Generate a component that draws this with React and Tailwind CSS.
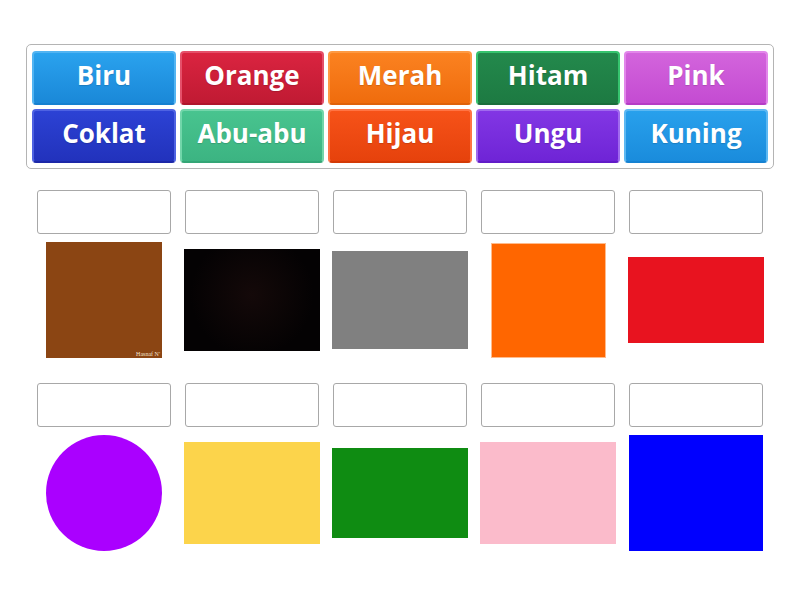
import React from "react";

const tiles = [
  { t: "Biru", c: "from-[#2aa2ee] to-[#1a88d8] border-[#52b4f2] border-b-[#1580d0]" },
  { t: "Orange", c: "from-[#da2440] to-[#c01a33] border-[#e5506a] border-b-[#b0152c]" },
  { t: "Merah", c: "from-[#fb8220] to-[#ef6c0c] border-[#fd9a44] border-b-[#e06208]" },
  { t: "Hitam", c: "from-[#23894c] to-[#1d7a42] border-[#36c46e] border-b-[#1a6e3b]" },
  { t: "Pink", c: "from-[#d364dc] to-[#c44bd2] border-[#e286ea] border-b-[#b53cc6]" },
  { t: "Coklat", c: "from-[#2c42d4] to-[#2232bc] border-[#4e62e2] border-b-[#1c28a8]" },
  { t: "Abu-abu", c: "from-[#48c48f] to-[#3cb482] border-[#72d6aa] border-b-[#34a676]" },
  { t: "Hijau", c: "from-[#f65218] to-[#e6420c] border-[#ff7444] border-b-[#d43a06]" },
  { t: "Ungu", c: "from-[#8236e4] to-[#6f24d6] border-[#a06aee] border-b-[#621cc8]" },
  { t: "Kuning", c: "from-[#28a0ec] to-[#1a8cdc] border-[#5cb8f2] border-b-[#1582d2]" },
];

function Tile({ t, c }) {
  return (
    <div
      className={`h-[54px] rounded-[4px] border-2 bg-linear-to-b ${c} flex items-center justify-center pb-[6px] text-white text-[26px] font-bold leading-none`}
      style={{ fontFamily: '"Open Sans", "Noto Sans", sans-serif' }}
    >
      <span className="[text-shadow:0_1px_1px_rgba(0,0,0,0.15)]">{t}</span>
    </div>
  );
}

function DropBox() {
  return <div className="w-[134px] h-[44px] mx-auto border border-[#a8a8a8] rounded-[3px] bg-white" />;
}

const row1 = [
  <div key="a" className="relative w-[116px] h-[116px] bg-[#8b4513]">
    <span className="absolute right-[2px] bottom-[1px] text-[6px] leading-none text-[#f0e0d0]" style={{ fontFamily: '"Liberation Serif", serif' }}>
      Hasnaf N'
    </span>
  </div>,
  <div key="b" className="w-[136px] h-[102px] bg-[radial-gradient(circle_at_50%_45%,#140909,#040203_70%)]" />,
  <div key="c" className="w-[136px] h-[98px] bg-[#808080]" />,
  <div key="d" className="w-[115px] h-[115px] bg-[#ff6600] border border-[#ffbb8c]" />,
  <div key="e" className="w-[136px] h-[86px] bg-[#e8131f]" />,
];

const row2 = [
  <div key="a" className="w-[116px] h-[116px] rounded-full bg-[#aa00ff]" />,
  <div key="b" className="w-[136px] h-[102px] bg-[#fcd44b]" />,
  <div key="c" className="w-[136px] h-[90px] bg-[#0f8c12]" />,
  <div key="d" className="w-[136px] h-[102px] bg-[#fbbbcb]" />,
  <div key="e" className="w-[134px] h-[116px] bg-[#0000ff]" />,
];

function Row({ imgs }) {
  return (
    <div className="grid grid-cols-[repeat(5,148px)] h-[193px]">
      {imgs.map((img, i) => (
        <div key={i} className="flex flex-col items-center">
          <DropBox />
          <div className="mt-[6px] h-[120px] w-full flex items-center justify-center">{img}</div>
        </div>
      ))}
    </div>
  );
}

export default function App() {
  return (
    <div className="w-[800px] h-[600px] bg-white relative overflow-hidden">
      <div className="pt-[44px] pl-[26px]">
        <div className="w-[748px] border border-[#b4b4b4] rounded-[5px] px-[5px] pt-[6px] pb-[5px] grid grid-cols-5 gap-[4px]">
          {tiles.map((x) => (
            <Tile key={x.t} {...x} />
          ))}
        </div>
      </div>
      <div className="pl-[30px] pt-[21px]">
        <Row imgs={row1} />
        <Row imgs={row2} />
      </div>
    </div>
  );
}
